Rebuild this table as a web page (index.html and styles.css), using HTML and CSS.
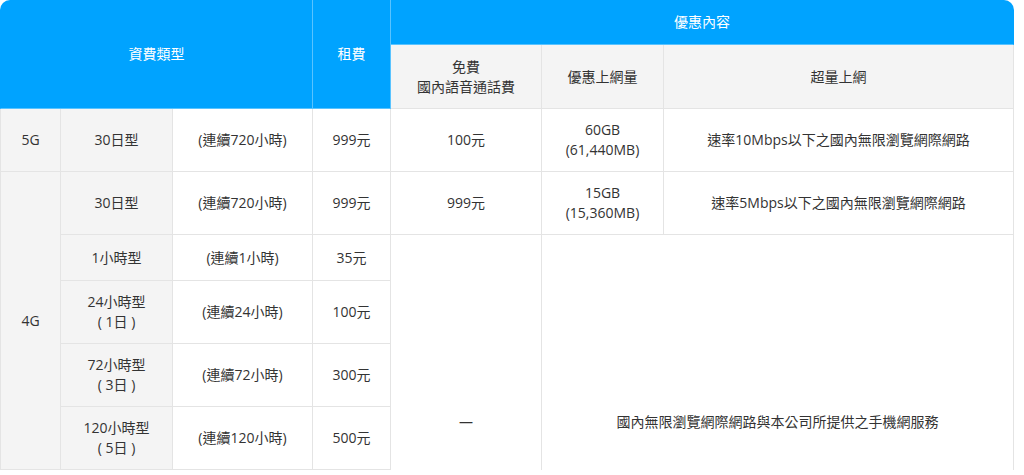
FILE: index.html
```html
<!DOCTYPE html>
<html lang="zh-Hant">
<head>
<meta charset="utf-8">
<title>資費</title>
<link rel="stylesheet" href="styles.css">
</head>
<body>
<div class="wrap">
<table class="plan">
  <colgroup>
    <col class="c1"><col class="c2"><col class="c3"><col class="c4"><col class="c5"><col class="c6"><col class="c7">
  </colgroup>
  <thead>
    <tr class="h1">
      <th colspan="3" rowspan="2" class="tl first">資費類型</th>
      <th rowspan="2">租費</th>
      <th colspan="3" class="tr">優惠內容</th>
    </tr>
    <tr class="h2">
      <th class="sub">免費<br>國內語音通話費</th>
      <th class="sub">優惠上網量</th>
      <th class="sub">超量上網</th>
    </tr>
  </thead>
  <tbody>
    <tr class="lg">
      <td class="g first">5G</td>
      <td class="g">30日型</td>
      <td>(連續720小時)</td>
      <td>999元</td>
      <td>100元</td>
      <td>60GB<br>(61,440MB)</td>
      <td>速率10Mbps以下之國內無限瀏覽網際網路</td>
    </tr>
    <tr class="lg">
      <td class="g first" rowspan="5">4G</td>
      <td class="g">30日型</td>
      <td>(連續720小時)</td>
      <td>999元</td>
      <td>999元</td>
      <td>15GB<br>(15,360MB)</td>
      <td>速率5Mbps以下之國內無限瀏覽網際網路</td>
    </tr>
    <tr class="sm">
      <td class="g">1小時型</td>
      <td>(連續1小時)</td>
      <td>35元</td>
      <td rowspan="4" class="span">—</td>
      <td rowspan="4" colspan="2" class="span">國內無限瀏覽網際網路與本公司所提供之手機網服務</td>
    </tr>
    <tr class="lg">
      <td class="g">24小時型<br>( 1日 )</td>
      <td>(連續24小時)</td>
      <td>100元</td>
    </tr>
    <tr class="lg">
      <td class="g">72小時型<br>( 3日 )</td>
      <td>(連續72小時)</td>
      <td>300元</td>
    </tr>
    <tr class="lg">
      <td class="g">120小時型<br>( 5日 )</td>
      <td>(連續120小時)</td>
      <td>500元</td>
    </tr>
  </tbody>
</table>
</div>
</body>
</html>
```

FILE: styles.css
```css
html, body {
  margin: 0;
  padding: 0;
  background: #ffffff;
}

body {
  font-family: "Open Sans", "Noto Sans CJK TC", sans-serif;
  font-size: 14px;
  color: #333333;
}

.wrap {
  width: 1014px;
}

.plan {
  width: 1014px;
  table-layout: fixed;
  border-collapse: separate;
  border-spacing: 0;
}

.c1 { width: 61px; }
.c2 { width: 112px; }
.c3 { width: 140px; }
.c4 { width: 78px; }
.c5 { width: 151px; }
.c6 { width: 122px; }
.c7 { width: 350px; }

.plan th,
.plan td {
  text-align: center;
  vertical-align: middle;
  line-height: 20px;
  padding: 0 6px;
  font-weight: normal;
  border-right: 1px solid #e4e4e4;
  border-bottom: 1px solid #e4e4e4;
}

.plan th {
  background: #00a3ff;
  color: #ffffff;
  border-right-color: rgba(255, 255, 255, 0.35);
  border-bottom-color: rgba(255, 255, 255, 0.35);
}

.plan th.sub {
  background: #f4f4f4;
  color: #333333;
  border-right-color: #e4e4e4;
  border-bottom-color: #e4e4e4;
}

.plan .first {
  border-left: 1px solid #e4e4e4;
}

.plan th.first {
  border-left-color: #00a3ff;
}

.plan th.tl {
  border-top-left-radius: 10px;
}

.plan th.tr {
  border-top-right-radius: 10px;
  border-right-color: #00a3ff;
}

.h1 { height: 45px; }
.h2 { height: 64px; }

.lg { height: 63px; }
.sm { height: 46px; }

.plan td.g {
  background: #f4f4f4;
}

.plan td.span {
  vertical-align: bottom;
  padding-bottom: 38px;
  border-bottom: none;
}
```
